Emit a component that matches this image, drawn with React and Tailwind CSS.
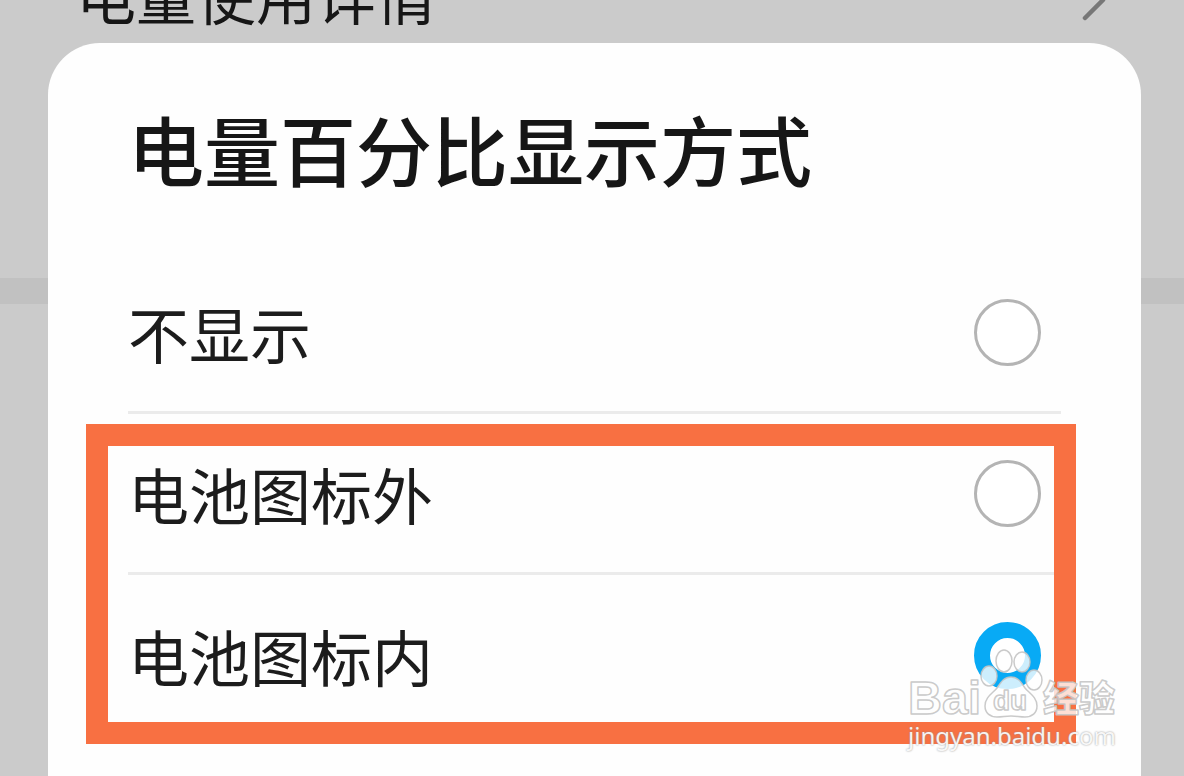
import { useState } from "react";
import { ChevronRight } from "lucide-react";

const inner = [
  { id: "outside", label: "电池图标外" },
  { id: "inside", label: "电池图标内" },
];

function OptionRow({ id, label, divider, selected, onSelect }) {
  return (
    <div
      className={
        divider
          ? "flex h-[161px] items-center justify-between border-b-[3px] border-[#ebebeb] pr-5"
          : "flex h-[161px] items-center justify-between pr-5"
      }
    >
      <label htmlFor={id} className="text-[61px] leading-none text-[#1c1c1c]">
        {label}
      </label>
      <input
        id={id}
        type="radio"
        name="battery-percent"
        checked={selected === id}
        onChange={() => onSelect(id)}
        className="size-[67px] shrink-0 appearance-none rounded-full border-[3px] border-[#b4b4b4] bg-white checked:border-[16px] checked:border-[#08aaf5]"
      />
    </div>
  );
}

function SettingsPage() {
  return (
    <div className="col-start-1 row-start-1 flex flex-col">
      <div className="flex h-9 items-end justify-between pr-[54px] pl-[76px]">
        <span className="pb-3 text-[60px] leading-none text-[#161616]">电量使用详情</span>
        <ChevronRight size={72} strokeWidth={1.5} className="text-[#777777]" />
      </div>
      <div className="mt-[242px] h-[26px] bg-[#c1c1c1]" />
    </div>
  );
}

/** Site mark in the lower right corner: paw logo over the address */
function Watermark() {
  return (
    <div className="pointer-events-none absolute right-[60px] bottom-6 z-20 flex flex-col">
      <svg width="220" height="72" viewBox="904 648 220 72" aria-label="Baidu 经验">
        <g
          fill="#ffffff"
          fillOpacity="0.8"
          stroke="#c4c4c4"
          strokeOpacity="0.9"
          strokeWidth="1.5"
          strokeLinejoin="round"
          fontFamily="'Liberation Sans', 'Noto Sans CJK SC', sans-serif"
          fontWeight="700"
        >
          <text x="908" y="714" fontSize="47">Bai</text>
          <ellipse cx="989" cy="676" rx="8" ry="10" />
          <ellipse cx="1004" cy="661" rx="8" ry="11" />
          <ellipse cx="1022" cy="662" rx="8" ry="10" />
          <ellipse cx="1034" cy="680" rx="8" ry="10" />
          <path d="M1011 677c-7 0-10 5-14 11-4 5-12 9-12 18 0 7 5 11 12 11 5 0 9-1 14-1s9 1 14 1c7 0 12-4 12-11 0-9-8-13-12-18-4-6-7-11-14-11z" />
          <text x="993" y="710" fontSize="28">du</text>
          <text x="1043" y="712" fontSize="36" fontWeight="900">经验</text>
        </g>
      </svg>
      <p className="pl-1 font-['Noto_Sans'] text-[24px] leading-[32px] text-white/90 [text-shadow:0_0_2px_#8c8c8c]">
        jingyan.baidu.com
      </p>
    </div>
  );
}

export default function App() {
  const [selected, setSelected] = useState("inside");

  return (
    <div className="relative grid min-h-screen overflow-hidden bg-[#cbcbcb] font-['Noto_Sans_CJK_SC',sans-serif]">
      <SettingsPage />
      <section
        role="dialog"
        aria-labelledby="dialog-title"
        className="z-10 col-start-1 row-start-1 mt-[43px] mr-[43px] ml-12 rounded-t-[52px] bg-[#fefefe] px-20 pt-[67px]"
      >
        <h1 id="dialog-title" className="mb-[67px] text-[76px] leading-none font-medium text-[#161616]">
          电量百分比显示方式
        </h1>
        <OptionRow id="hidden" label="不显示" divider selected={selected} onSelect={setSelected} />
        <div className="relative">
          {inner.map((o, i) => (
            <OptionRow
              key={o.id}
              id={o.id}
              label={o.label}
              divider={i < inner.length - 1}
              selected={selected}
              onSelect={setSelected}
            />
          ))}
          <div className="pointer-events-none absolute top-[10px] right-[-15px] bottom-[-8px] left-[-42px] border-[22px] border-[#f87042]" />
        </div>
      </section>
      <Watermark />
    </div>
  );
}
